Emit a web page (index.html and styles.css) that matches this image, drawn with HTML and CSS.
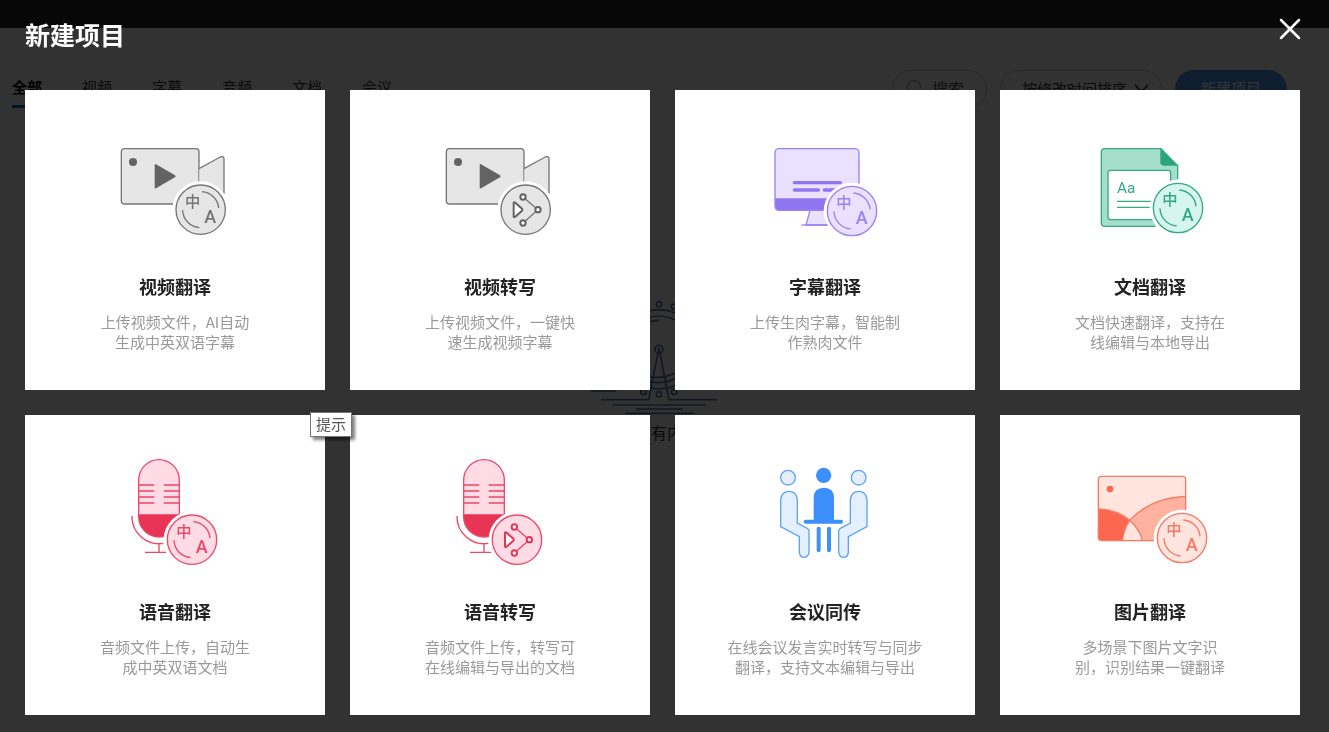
FILE: index.html
```html
<!DOCTYPE html>
<html lang="zh-CN">
<head>
<meta charset="utf-8">
<meta name="viewport" content="width=device-width, initial-scale=1">
<title>新建项目</title>
<link rel="stylesheet" href="styles.css">
</head>
<body>
<svg class="defs" aria-hidden="true">
  <symbol id="badge-translate" viewBox="-90 -90 180 180">
    <circle r="85" fill="#fff"/>
    <circle r="74" class="tint line"/>
    <path class="line" fill="none" d="M4-54A54 54 0 0 1 54-5M-54 1A54 54 0 0 0-4 54"/>
    <text class="glyph" x="-24" y="-8" font-size="46">中</text>
    <text class="glyph" x="29" y="40" font-size="54">A</text>
  </symbol>
  <symbol id="badge-share" viewBox="-90 -90 180 180">
    <circle r="85" fill="#fff"/>
    <circle r="74" class="tint line"/>
    <path class="line" fill="none" d="M-8-38L37 0L-8 40"/>
    <g class="node">
      <path d="M-36-21V21Q-34 24-31 21L-11 3Q-8 0-11-3L-31-21Q-34-24-36-21Z"/>
      <circle cx="-8" cy="-38" r="8"/><circle cx="37" r="8"/><circle cx="-8" cy="40" r="8"/>
    </g>
  </symbol>
  <symbol id="camera" viewBox="0 0 390 360">
    <g transform="translate(0 15)">
      <rect class="tint line" x="34" y="41" width="233" height="166" rx="10"/>
      <path class="tint" d="M268 103L336 66Q342 64 342 72V172H268Z"/>
      <path class="line" fill="none" d="M267 101L331 66Q342 62 342 72V176"/>
      <circle class="solid" cx="69" cy="81" r="12"/>
      <path class="solid" d="M134 90Q134 86 138 88L195 121Q199 124 195 127L138 160Q134 162 134 158Z"/>
    </g>
  </symbol>
  <symbol id="mic" viewBox="0 0 390 360">
    <g transform="translate(30 -15)">
      <path class="tint" d="M56 90A61 61 0 0 1 178 90V200A61 61 0 0 1 56 200Z"/>
      <path class="solid" d="M56 193H178V200A61 61 0 0 1 56 200Z"/>
      <path class="line" fill="none" d="M56 90A61 61 0 0 1 178 90V200A61 61 0 0 1 56 200ZM56 105H103M131 105H178M56 123H103M131 123H178M56 141H103M131 141H178M56 159H103M131 159H178M36 198A81 81 0 0 0 130 280M117 280V307M75 307H138"/>
    </g>
  </symbol>
</svg>

<div class="page" aria-hidden="true">
  <header class="topbar"></header>
  <div class="toolbar">
    <nav class="tabs">
      <a class="tab tab-active" href="#all">全部</a>
      <a class="tab" href="#video">视频</a>
      <a class="tab" href="#subtitle">字幕</a>
      <a class="tab" href="#audio">音频</a>
      <a class="tab" href="#doc">文档</a>
      <a class="tab" href="#meeting">会议</a>
    </nav>
    <div class="tools">
      <label class="pill search">
        <svg width="16" height="16" viewBox="0 0 16 16"><circle cx="8" cy="7" r="6.500" fill="none" stroke="#888"/><path d="M12 12l3 3" stroke="#888"/></svg>
        <input class="search-input" type="text" placeholder="搜索" aria-label="搜索">
      </label>
      <div class="pill sort">
        <select class="sort-select" aria-label="排序"><option>按修改时间排序</option></select>
        <svg class="chevron" width="15" height="9" viewBox="0 0 15 9"><path d="M1 1l6.500 6.500L14 1" fill="none" stroke="#222" stroke-width="1.500"/></svg>
      </div>
      <button class="create" type="button">新建项目</button>
    </div>
  </div>
  <main class="empty">
    <svg width="158" height="125" viewBox="0 0 474 375" fill="none" stroke="#5677b0" stroke-width="5">
      <circle cx="237" cy="43" r="8"/><circle cx="282" cy="50" r="8"/><circle cx="237" cy="178" r="12"/>
      <circle cx="237" cy="178" r="119"/><circle cx="237" cy="178" r="100"/><path d="M205 97Q221 91 237 91M205 258Q237 270 285 249"/>
      <circle cx="190" cy="306" r="8"/><circle cx="237" cy="313" r="8"/><circle cx="282" cy="306" r="8"/>
      <path d="M63 329H206L237 174L267 329H411M98 345H378M168 357H309M136 370H341M32 303H110"/>
    </svg>
    <p class="empty-text">还没有内容</p>
  </main>
</div>

<div class="overlay" role="dialog" aria-modal="true" aria-labelledby="dialog-title">
  <div class="dialog-head">
    <h1 class="dialog-title" id="dialog-title">新建项目</h1>
    <button class="close" type="button" aria-label="关闭"><svg width="22" height="22" viewBox="0 0 22 22"><path d="M2 2l18 18M20 2L2 20" fill="none" stroke="#fff" stroke-width="2.500" stroke-linecap="round"/></svg></button>
  </div>
  <div class="cards">
    <a class="card gray" href="#video-translate">
      <svg class="icon" viewBox="0 0 390 360"><use href="#camera"/><use href="#badge-translate" x="182" y="149" width="180" height="180"/></svg>
      <h2 class="name">视频翻译</h2>
      <p class="desc">上传视频文件，AI自动<br>生成中英双语字幕</p>
    </a>
    <a class="card gray" href="#video-transcribe">
      <svg class="icon" viewBox="0 0 390 360"><use href="#camera"/><use href="#badge-share" x="182" y="149" width="180" height="180"/></svg>
      <h2 class="name">视频转写</h2>
      <p class="desc">上传视频文件，一键快<br>速生成视频字幕</p>
    </a>
    <a class="card purple" href="#subtitle-translate">
      <svg class="icon" viewBox="0 0 390 360">
        <g transform="translate(0 15)">
          <path class="tint line" d="M150 226L138 270H210V226Z"/>
          <path class="line" d="M124 270H210"/>
          <rect class="tint" x="45" y="41" width="252" height="185" rx="12"/>
          <path class="solid" d="M45 190H297V214Q297 226 285 226H57Q45 226 45 214Z"/>
          <rect class="line" fill="none" x="45" y="41" width="252" height="185" rx="12"/>
          <path d="M103 143H241M103 165H175M193 165H240" stroke="#9075ef" stroke-width="10" stroke-linecap="round"/>
        </g>
        <use href="#badge-translate" x="186" y="153" width="180" height="180"/>
      </svg>
      <h2 class="name">字幕翻译</h2>
      <p class="desc">上传生肉字幕，智能制<br>作熟肉文件</p>
    </a>
    <a class="card green" href="#doc-translate">
      <svg class="icon" viewBox="0 0 390 360">
        <g transform="translate(0 15)">
          <path class="line" fill="#a5dfcb" d="M60 41H228L278 92V274H60Q49 274 49 263V52Q49 41 60 41Z"/>
          <path fill="#fff" d="M212 200L281 130V280H212Z"/>
          <path class="solid" d="M226 41L278 92H236Q226 92 226 82Z"/>
          <rect class="line" x="69" y="106" width="188" height="148" rx="7" fill="#fff"/>
          <path class="line" d="M96 199H210M96 217H210"/>
          <text class="sample" x="96" y="175">Aa</text>
        </g>
        <use href="#badge-translate" x="189" y="144" width="180" height="180"/>
      </svg>
      <h2 class="name">文档翻译</h2>
      <p class="desc">文档快速翻译，支持在<br>线编辑与本地导出</p>
    </a>
    <div class="slot">
      <a class="card pink" href="#audio-translate">
        <svg class="icon" viewBox="0 0 390 360"><use href="#mic"/><use href="#badge-translate" x="156" y="164" width="180" height="180"/></svg>
        <h2 class="name">语音翻译</h2>
        <p class="desc">音频文件上传，自动生<br>成中英双语文档</p>
      </a>
      <span class="tooltip" role="tooltip">提示</span>
    </div>
    <a class="card pink" href="#audio-transcribe">
      <svg class="icon" viewBox="0 0 390 360"><use href="#mic"/><use href="#badge-share" x="156" y="164" width="180" height="180"/></svg>
      <h2 class="name">语音转写</h2>
      <p class="desc">音频文件上传，转写可<br>在线编辑与导出的文档</p>
    </a>
    <a class="card blue" href="#meeting-interpret">
      <svg class="icon" viewBox="0 0 390 360">
        <g transform="translate(15 0)">
          <circle class="tint line" cx="69" cy="68" r="22"/><circle class="tint line" cx="281" cy="68" r="22"/>
          <circle class="solid" cx="176" cy="61" r="23"/>
          <path class="solid" d="M146 200V129Q146 98 177 98Q207 98 207 129V200Z"/>
          <path d="M122 200H228M161 221V286M192 221V286" stroke="#3d90fb" stroke-width="12" stroke-linecap="round"/>
          <path class="tint line" d="M47 215V134Q50 109 72 109Q94 109 97 134V204L127 220Q133 223 132 232V292Q129 307 117 307Q105 307 103 292V245Z"/>
          <path class="tint line" d="M306 215V134Q303 109 281 109Q259 109 256 134V204L226 220Q220 223 221 232V292Q224 307 236 307Q248 307 250 292V245Z"/>
        </g>
      </svg>
      <h2 class="name">会议同传</h2>
      <p class="desc">在线会议发言实时转写与同步<br>翻译，支持文本编辑与导出</p>
    </a>
    <a class="card orange" href="#image-translate">
      <svg class="icon" viewBox="0 0 390 360">
        <g transform="translate(0 30)">
          <rect class="tint" x="40" y="34" width="262" height="193" rx="10"/>
          <path class="solid" d="M40 132Q98 135 134 166Q114 196 113 227H50Q40 227 40 217Z"/>
          <path fill="#ffb29f" d="M302 94Q198 98 134 166Q166 196 172 227H302Z"/>
          <path class="line" fill="none" d="M40 132Q98 135 134 166Q166 196 172 227M302 94Q198 98 134 166Q114 196 113 227"/>
          <rect class="line" fill="none" x="40" y="34" width="262" height="193" rx="10"/>
          <circle class="solid" cx="75" cy="72" r="10"/>
        </g>
        <use href="#badge-translate" x="201" y="159" width="180" height="180"/>
      </svg>
      <h2 class="name">图片翻译</h2>
      <p class="desc">多场景下图片文字识<br>别，识别结果一键翻译</p>
    </a>
  </div>
</div>
</body>
</html>
```

FILE: styles.css
```css
* { box-sizing: border-box; }

body {
  margin: 0;
  background: #fafafa;
  color: #333;
  font-family: "Noto Sans CJK SC", sans-serif;
  font-size: 15px;
}

h1, h2, p { margin: 0; }
a { color: inherit; text-decoration: none; }
button, input, select { font: inherit; color: inherit; }
.defs { display: none; }

/* Page behind the dialog */
.page { padding-right: 11px; }
.topbar { height: 28px; margin-right: -11px; background: #232323; }
.toolbar {
  display: flex;
  justify-content: space-between;
  height: 90px;
  padding: 42px 31px 0 12px;
}
.tabs { display: flex; gap: 40px; }
.tab { height: 38px; line-height: 34px; }
.tab-active { border-bottom: 3px solid #1b5fc0; color: #000; font-weight: 700; }
.tools { display: flex; gap: 13px; height: 38px; }
.pill {
  display: flex;
  align-items: center;
  border: 1px solid #c8c8c8;
  border-radius: 20px;
}
.search { width: 95px; padding: 0 0 3px 13px; gap: 10px; font-size: 16px; }
.search-input { width: 48px; padding: 0; border: 0; background: none; }
.search-input::placeholder { color: #555; opacity: 1; }
.sort { width: 162px; padding: 0 0 2px 21px; gap: 6px; }
.sort-select { width: 106px; padding: 0; border: 0; background: none; appearance: none; }
.create {
  width: 112px;
  padding: 0 0 3px;
  border: 0;
  border-radius: 20px;
  background: #4a90f0;
  color: #fff;
}
.empty {
  display: flex;
  flex-direction: column;
  align-items: center;
  padding-top: 172px;
}
.empty-text { margin-top: 5px; font-size: 16px; line-height: 24px; }

/* Dialog */
.overlay {
  position: fixed;
  inset: 0;
  overflow: hidden;
  padding: 0 29px 0 25px;
  background: rgba(0, 0, 0, 0.8);
}
.dialog-head {
  display: flex;
  justify-content: space-between;
  align-items: flex-start;
  height: 90px;
}
.dialog-title { padding-top: 16px; color: #fff; font-size: 25px; line-height: 36px; }
.close {
  display: flex;
  margin: 18px -1px 0 0;
  padding: 0;
  border: 0;
  background: none;
}
.cards { display: grid; grid-template-columns: repeat(4, 1fr); gap: 25px; }
.slot { position: relative; display: grid; }
.card {
  display: flex;
  flex-direction: column;
  align-items: center;
  min-height: 300px;
  padding-top: 40px;
  background: #fff;
  text-align: center;
}
.icon { width: 130px; height: 120px; }
.name { margin-top: 24px; color: #222; font-size: 18px; line-height: 24px; }
.desc { margin-top: 14px; color: #999; line-height: 20px; }
.tooltip {
  position: absolute;
  top: -3px;
  right: -27px;
  z-index: 1;
  padding: 0 5px 2px;
  border: 1px solid #767676;
  background: #fff;
  box-shadow: 3px 3px 3px rgba(0, 0, 0, 0.5);
  color: #575757;
  line-height: 21px;
}

/* Icon palette */
.gray { --line: #757575; --tint: #e6e6e6; --solid: #636363; }
.purple { --line: #9a82f3; --tint: #e9e1ff; --solid: #9075f0; }
.green { --line: #35a981; --tint: #d6f5ec; --solid: #2ca57c; }
.pink { --line: #ec4867; --tint: #ffdbe6; --solid: #e83556; }
.blue { --line: #5ca3fb; --tint: #e4f0ff; --solid: #3d90fb; }
.orange { --line: #f77965; --tint: #ffe5de; --solid: #fb674f; }
.line { stroke: var(--line); stroke-width: 4; }
.tint { fill: var(--tint); }
.solid { fill: var(--solid); }
.node { fill: #fff; stroke: var(--solid); stroke-width: 6; }
.glyph {
  fill: var(--line);
  font-family: Roboto, "Noto Sans CJK SC", sans-serif;
  font-weight: 500;
  text-anchor: middle;
}
.sample { fill: var(--line); font-family: Roboto, sans-serif; font-size: 46px; font-weight: 400; }
```
